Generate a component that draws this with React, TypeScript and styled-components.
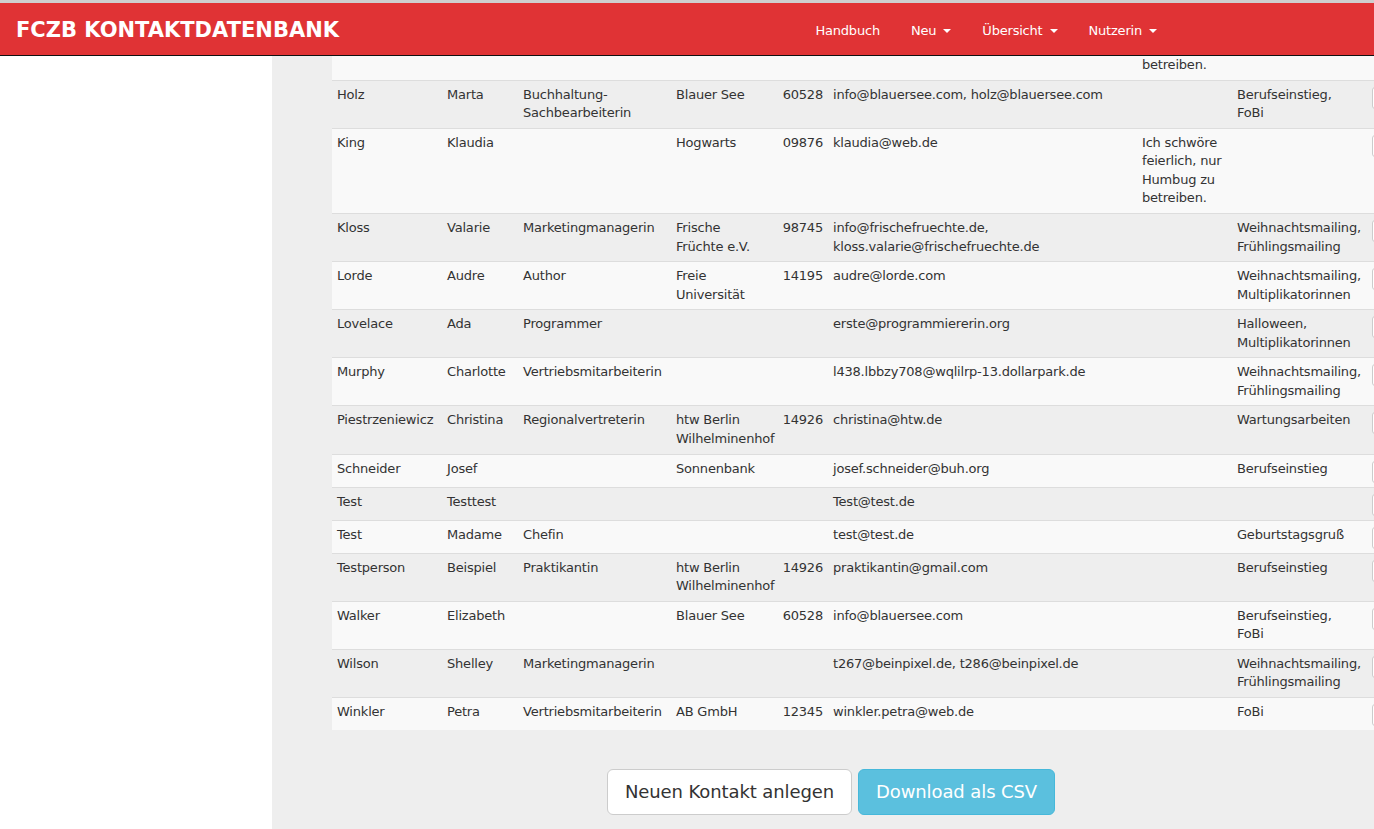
import React from 'react';
import styled, {createGlobalStyle} from "styled-components";

const GlobalStyle = createGlobalStyle`
    html, body {
        margin: 0;
        padding: 0;
        overflow: hidden;
        background: #fff;
    }
    body {
        font-family: "DejaVu Sans", Verdana, sans-serif;
        font-size: 13px;
        line-height: 1.42857;
        letter-spacing: -0.2px;
        color: #333;
    }
`;

const StyledNavbar = styled.header`
    position: fixed;
    top: 0;
    left: 0;
    right: 0;
    z-index: 10;
    height: 48px;
    border-top: 3px solid #cfcfcf;
    border-bottom: 1px solid #111;
    background: #e03335;
    display: flex;
    align-items: center;
    justify-content: space-between;
    padding: 4px 217px 0 16px;
`;

const StyledBrand = styled.div`
    color: #fff;
    font-weight: bold;
    font-size: 21px;
    letter-spacing: 0;
`;

const StyledNav = styled.nav`
    display: flex;
    align-items: center;
    gap: 31px;
`;

const StyledNavLink = styled.a`
    color: #fff;
    font-size: 13px;
    text-decoration: none;
    display: flex;
    align-items: center;
`;

const StyledCaret = styled.span`
    display: inline-block;
    width: 0;
    height: 0;
    margin-left: 7px;
    border-top: 4px solid #fff;
    border-left: 4px solid transparent;
    border-right: 4px solid transparent;
`;

const StyledPage = styled.div`
    display: flex;
    padding-top: 56px;
    min-height: 100vh;
    box-sizing: border-box;
`;

const StyledSidebar = styled.aside`
    width: 272px;
    flex-shrink: 0;
    background: #fff;
`;

const StyledMain = styled.main`
    width: 1118px;
    flex-shrink: 0;
    background: #eeeeee;
`;

const StyledTable = styled.table`
    table-layout: fixed;
    width: 1095px;
    margin-left: 60px;
    border-collapse: collapse;
    border-spacing: 0;

    tbody tr:nth-child(odd) {
        background: #f9f9f9;
    }
    tbody tr:nth-child(even) {
        background: #eeeeee;
    }
    tbody tr:first-child td {
        border-top: none;
        padding-top: 0;
    }
`;

const StyledCell = styled.td<{ $numeric?: boolean }>`
    padding: 5px;
    vertical-align: top;
    border-top: 1px solid #dddddd;
    text-align: ${p => p.$numeric ? "right" : "left"};
`;

const StyledEditButton = styled.span`
    display: block;
    box-sizing: border-box;
    width: 40px;
    height: 22px;
    margin-top: 1px;
    margin-bottom: -1px;
    border: 1px solid #cccccc;
    border-radius: 3px;
    background: #fff;
`;

const StyledActions = styled.div`
    display: flex;
    justify-content: center;
    gap: 6px;
    padding: 39px 0 40px;
`;

const StyledButton = styled.button<{ $variant?: "default" | "info" }>`
    font-family: "DejaVu Sans", Verdana, sans-serif;
    font-size: 18px;
    line-height: 1.3333;
    letter-spacing: -0.1px;
    padding: 10px 17px;
    border-radius: 6px;
    cursor: pointer;
    border: 1px solid ${p => p.$variant === "info" ? "#46b8da" : "#cccccc"};
    background: ${p => p.$variant === "info" ? "#5bc0de" : "#ffffff"};
    color: ${p => p.$variant === "info" ? "#ffffff" : "#333333"};
`;

type Contact = [string, string, string, string, string, string, string, string];

const contacts: Contact[] = [
    ["Holz", "Marta", "Buchhaltung-Sachbearbeiterin", "Blauer See", "60528", "info@blauersee.com, holz@blauersee.com", "", "Berufseinstieg, FoBi"],
    ["King", "Klaudia", "", "Hogwarts", "09876", "klaudia@web.de", "Ich schwöre feierlich, nur Humbug zu betreiben.", ""],
    ["Kloss", "Valarie", "Marketingmanagerin", "Frische Früchte e.V.", "98745", "info@frischefruechte.de, kloss.valarie@frischefruechte.de", "", "Weihnachtsmailing, Frühlingsmailing"],
    ["Lorde", "Audre", "Author", "Freie Universität", "14195", "audre@lorde.com", "", "Weihnachtsmailing, Multiplikatorinnen"],
    ["Lovelace", "Ada", "Programmer", "", "", "erste@programmiererin.org", "", "Halloween, Multiplikatorinnen"],
    ["Murphy", "Charlotte", "Vertriebsmitarbeiterin", "", "", "l438.lbbzy708@wqlilrp-13.dollarpark.de", "", "Weihnachtsmailing, Frühlingsmailing"],
    ["Piestrzeniewicz", "Christina", "Regionalvertreterin", "htw Berlin Wilhelminenhof", "14926", "christina@htw.de", "", "Wartungsarbeiten"],
    ["Schneider", "Josef", "", "Sonnenbank", "", "josef.schneider@buh.org", "", "Berufseinstieg"],
    ["Test", "Testtest", "", "", "", "Test@test.de", "", ""],
    ["Test", "Madame", "Chefin", "", "", "test@test.de", "", "Geburtstagsgruß"],
    ["Testperson", "Beispiel", "Praktikantin", "htw Berlin Wilhelminenhof", "14926", "praktikantin@gmail.com", "", "Berufseinstieg"],
    ["Walker", "Elizabeth", "", "Blauer See", "60528", "info@blauersee.com", "", "Berufseinstieg, FoBi"],
    ["Wilson", "Shelley", "Marketingmanagerin", "", "", "t267@beinpixel.de, t286@beinpixel.de", "", "Weihnachtsmailing, Frühlingsmailing"],
    ["Winkler", "Petra", "Vertriebsmitarbeiterin", "AB GmbH", "12345", "winkler.petra@web.de", "", "FoBi"],
];

const columnWidths = [110, 76, 153, 104, 53, 309, 95, 135, 60];
const PLZ_COLUMN = 4;

const App = () => {
    return (
        <>
            <GlobalStyle/>
            <StyledNavbar>
                <StyledBrand>FCZB KONTAKTDATENBANK</StyledBrand>
                <StyledNav>
                    <StyledNavLink href="#">Handbuch</StyledNavLink>
                    <StyledNavLink href="#">Neu<StyledCaret/></StyledNavLink>
                    <StyledNavLink href="#">Übersicht<StyledCaret/></StyledNavLink>
                    <StyledNavLink href="#">Nutzerin<StyledCaret/></StyledNavLink>
                </StyledNav>
            </StyledNavbar>
            <StyledPage>
                <StyledSidebar/>
                <StyledMain>
                    <StyledTable>
                        <colgroup>
                            {columnWidths.map((w, i) => <col key={i} style={{width: w}}/>)}
                        </colgroup>
                        <tbody>
                            {/* tail of the row scrolled under the navbar */}
                            <tr>
                                <StyledCell/><StyledCell/><StyledCell/><StyledCell/><StyledCell/><StyledCell/>
                                <StyledCell>betreiben.</StyledCell>
                                <StyledCell/><StyledCell/>
                            </tr>
                            {contacts.map((c, i) => (
                                <tr key={i}>
                                    {c.map((value, j) => (
                                        <StyledCell key={j} $numeric={j === PLZ_COLUMN}>{value}</StyledCell>
                                    ))}
                                    <StyledCell><StyledEditButton/></StyledCell>
                                </tr>
                            ))}
                        </tbody>
                    </StyledTable>
                    <StyledActions>
                        <StyledButton>Neuen Kontakt anlegen</StyledButton>
                        <StyledButton $variant="info">Download als CSV</StyledButton>
                    </StyledActions>
                </StyledMain>
            </StyledPage>
        </>
    );
};

export default App;
